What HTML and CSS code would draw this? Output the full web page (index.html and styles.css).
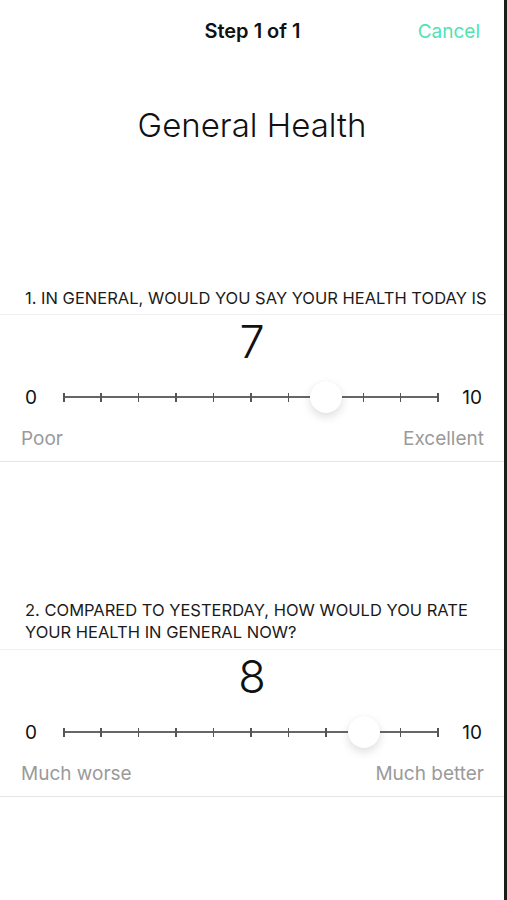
FILE: index.html
```html
<!DOCTYPE html>
<html lang="en">
<head>
  <meta charset="UTF-8" />
  <title>General Health</title>
  <link rel="stylesheet" href="styles.css">
</head>
<body>

<div class="screen">
  <div class="nav">
    <span class="nav-title">Step 1 of 1</span>
    <span class="nav-cancel">Cancel</span>
  </div>

  <h1 class="title">General Health</h1>

  <div class="question q1">
    <div class="question-label">1. In general, would you say your health today is</div>
    <div class="answer">
      <div class="value">7</div>
      <div class="slider-row">
        <span class="bound">0</span>
        <div class="track">
          <span class="tick"></span><span class="tick"></span><span class="tick"></span><span class="tick"></span>
          <span class="tick"></span><span class="tick"></span><span class="tick"></span><span class="tick"></span>
          <span class="tick"></span><span class="tick"></span><span class="tick"></span>
          <span class="thumb" style="left: 70%"></span>
        </div>
        <span class="bound">10</span>
      </div>
      <div class="ends">
        <span>Poor</span>
        <span>Excellent</span>
      </div>
    </div>
  </div>

  <div class="question q2">
    <div class="question-label">2. Compared to yesterday, how would you rate your health in general now?</div>
    <div class="answer">
      <div class="value">8</div>
      <div class="slider-row">
        <span class="bound">0</span>
        <div class="track">
          <span class="tick"></span><span class="tick"></span><span class="tick"></span><span class="tick"></span>
          <span class="tick"></span><span class="tick"></span><span class="tick"></span><span class="tick"></span>
          <span class="tick"></span><span class="tick"></span><span class="tick"></span>
          <span class="thumb" style="left: 80%"></span>
        </div>
        <span class="bound">10</span>
      </div>
      <div class="ends">
        <span>Much worse</span>
        <span>Much better</span>
      </div>
    </div>
  </div>
</div>

</body>
</html>
```

FILE: styles.css
```css
* { box-sizing: border-box; }
body {
  margin: 0;
  background-color: #ffffff;
  color: #111;
  font-family: Inter, 'Noto Sans', sans-serif;
}
.screen {
  width: 507px;
  min-height: 900px;
  border-right: 3px solid #1c1c1c;
}
.nav {
  height: 62px;
  display: flex;
  align-items: center;
  justify-content: center;
  position: relative;
}
.nav-title {
  font-size: 20px;
  font-weight: 600;
  color: #111;
  margin-left: 1px;
}
.nav-cancel {
  position: absolute;
  right: 24px;
  top: 20px;
  font-size: 19px;
  color: #4fe3b4;
}
.title {
  margin: 41px 0 0;
  text-align: center;
  font-size: 33px;
  font-weight: 300;
  line-height: 44px;
  color: #111;
}
.question-label {
  padding: 0 8px 0 25px;
  font-size: 16.5px;
  line-height: 22px;
  text-transform: uppercase;
  color: #1a1a1a;
}
.q1 { margin-top: 140px; }
.q2 { margin-top: 137px; }
.q2 .answer { margin-top: 6px; }
.answer {
  margin-top: 5px;
  border-top: 1px solid #f0f0f0;
  border-bottom: 1px solid #e6e6e6;
  padding: 2px 0 11px;
}
.value {
  text-align: center;
  font-size: 45px;
  font-weight: 300;
  line-height: 50px;
}
.slider-row {
  display: flex;
  align-items: center;
  margin-top: 10px;
  padding: 0 22px 0 25px;
  height: 40px;
}
.bound {
  font-size: 19px;
  width: 26px;
  color: #111;
}
.bound:last-child {
  text-align: right;
  width: 22px;
}
.track {
  flex: 1;
  position: relative;
  height: 1.5px;
  background-color: #666;
  margin: 0 21px 0 12px;
  display: flex;
  justify-content: space-between;
  align-items: center;
}
.tick {
  width: 1.5px;
  height: 9px;
  background-color: #555;
}
.thumb {
  position: absolute;
  top: 50%;
  width: 32px;
  height: 32px;
  margin: -16px 0 0 -16px;
  border-radius: 50%;
  background-color: #fff;
  box-shadow: 0 4px 10px rgba(0, 0, 0, 0.13), 0 0 1px rgba(0, 0, 0, 0.08);
}
.ends {
  display: flex;
  justify-content: space-between;
  padding: 0 20px 0 21px;
  margin-top: 10px;
  font-size: 19px;
  color: #9a9a9a;
}
```
